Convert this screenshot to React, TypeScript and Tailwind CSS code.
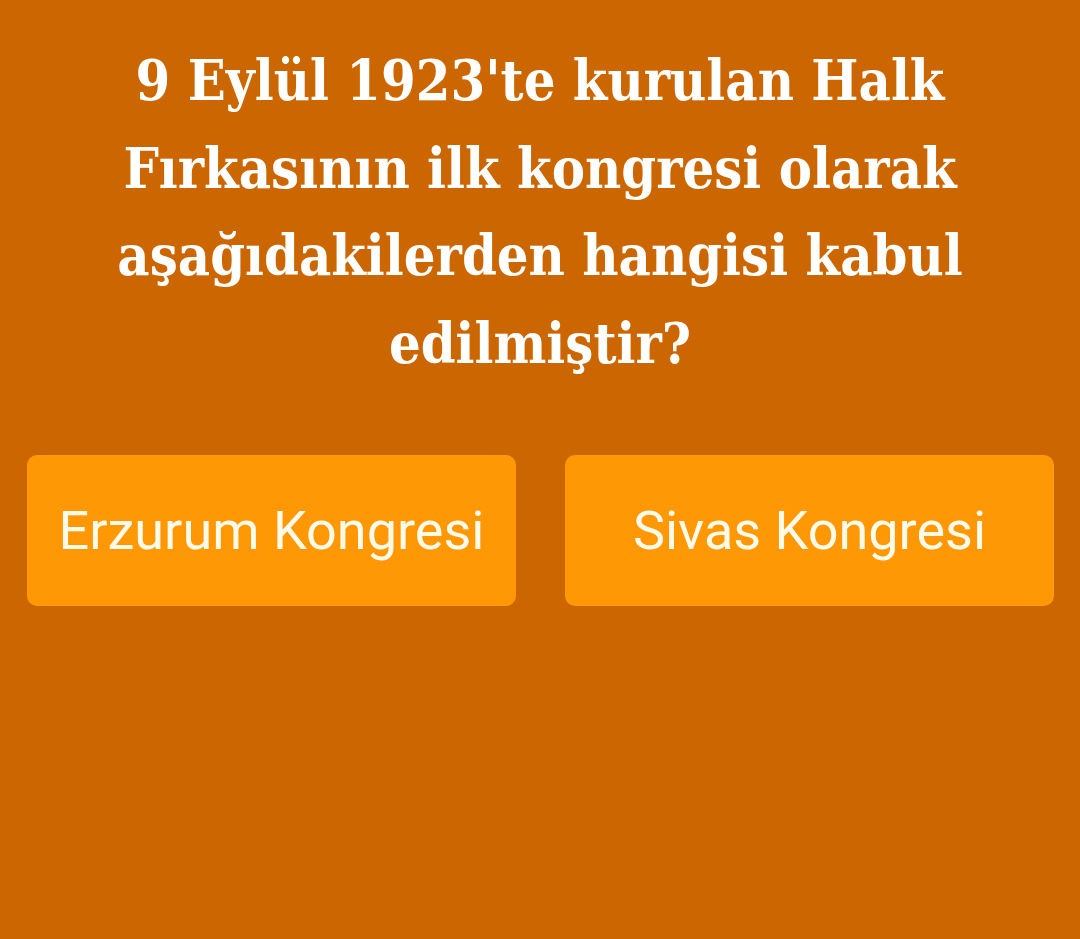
export default function App() {
  return (
    <div className="flex min-h-[939px] w-full flex-col bg-[#cc6600]">
      {/* Question */}
      <h1 className="px-8 pt-[37px] text-center font-['DejaVu_Serif_Condensed','DejaVu_Serif',serif] text-[55.5px] font-bold leading-[87.5px] text-white">
        9 Eylül 1923'te kurulan Halk
        <br />
        Fırkasının ilk kongresi olarak
        <br />
        aşağıdakilerden hangisi kabul
        <br />
        edilmiştir?
      </h1>

      {/* Answers */}
      <div className="mt-[68px] grid grid-cols-2 gap-[49px] pl-[27px] pr-[26px]">
        <button className="flex h-[151px] items-center justify-center rounded-[10px] bg-[#ff9804] font-['Roboto',sans-serif] text-[54px] text-[#fffbea]">
          Erzurum Kongresi
        </button>
        <button className="flex h-[151px] items-center justify-center rounded-[10px] bg-[#ff9804] font-['Roboto',sans-serif] text-[54px] text-[#fffbea]">
          Sivas Kongresi
        </button>
      </div>
    </div>
  )
}
